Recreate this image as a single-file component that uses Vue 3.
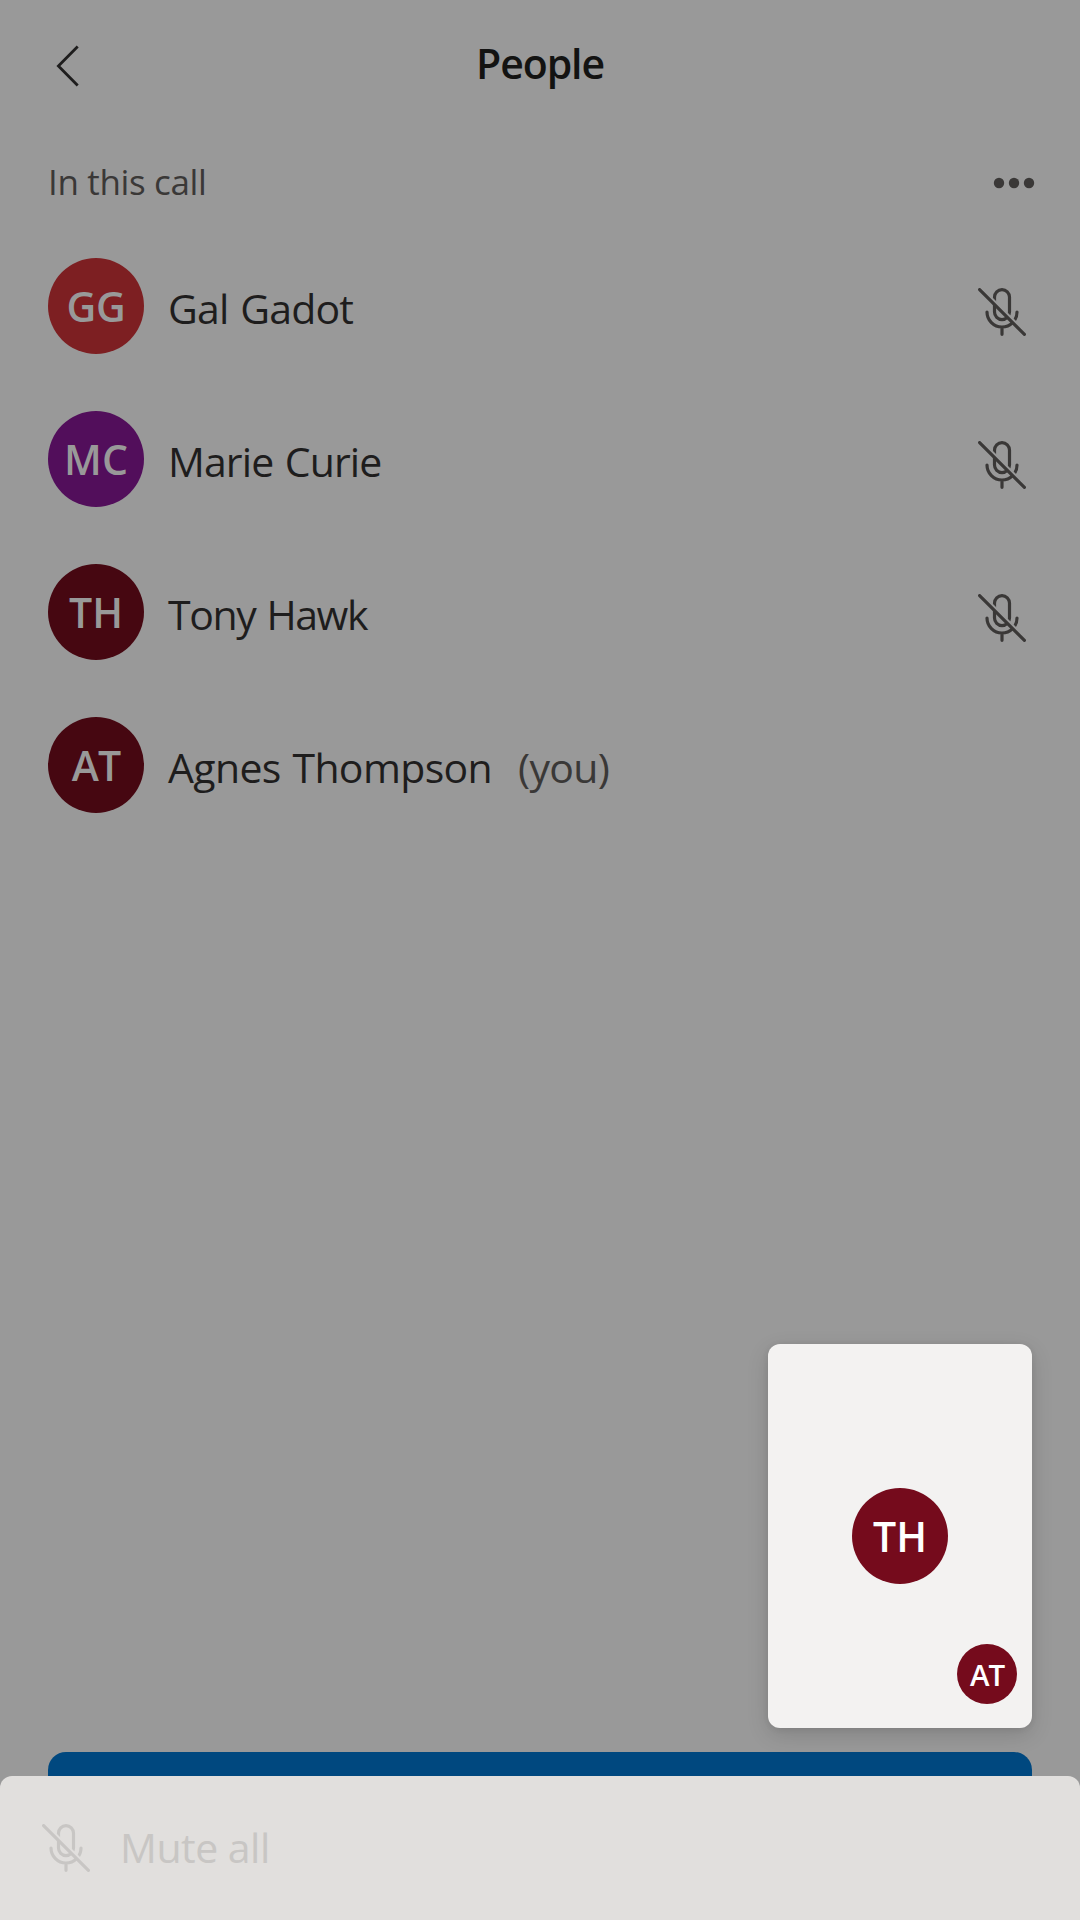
<script setup>
const people = [
  { initials: 'GG', name: 'Gal Gadot', color: '#7d1f22', spacing: '-0.8px', tight: '-0.3px', muted: true },
  { initials: 'MC', name: 'Marie Curie', color: '#520e5b', spacing: '-0.9px', tight: '0.2px', muted: true },
  { initials: 'TH', name: 'Tony Hawk', color: '#460711', spacing: '-1.4px', tight: '0px', muted: true },
  { initials: 'AT', name: 'Agnes Thompson', color: '#460711', spacing: '-0.65px', tight: '-1px', muted: false, you: true },
]
</script>

<template>
  <div class="screen">
    <svg class="defs" width="0" height="0" aria-hidden="true">
      <defs>
        <clipPath id="above-slash"><path d="M0 -5H48V43Z" /></clipPath>
        <clipPath id="below-slash"><path d="M0 0L48 48H0Z" /></clipPath>
        <symbol id="mic-off" viewBox="0 0 48 48">
          <g fill="none" stroke="currentColor" stroke-width="3.2" stroke-linecap="round">
            <g clip-path="url(#above-slash)">
              <rect x="16.5" y="1.6" width="15" height="30" rx="7.5" />
              <path d="M9 24a15 15 0 0 0 30 0" />
            </g>
            <g clip-path="url(#below-slash)">
              <rect x="16.5" y="1.6" width="15" height="30" rx="7.5" />
              <path d="M9 24a15 15 0 0 0 30 0M24 39v7.3" />
            </g>
            <path d="M1.6 1.6l44.8 44.8" />
          </g>
        </symbol>
      </defs>
    </svg>

    <header class="bar">
      <svg class="back" width="30" height="48" viewBox="0 0 30 48">
        <path d="M23.7 4.5L4.4 24l19.3 19.5" fill="none" stroke="currentColor" stroke-width="2.8" />
      </svg>
      <h1>People</h1>
    </header>

    <section class="section">
      <h2>In this call</h2>
      <svg width="42" height="12" viewBox="0 0 42 12" fill="currentColor">
        <circle cx="6" cy="6" r="5.2" /><circle cx="21" cy="6" r="5.2" /><circle cx="36" cy="6" r="5.2" />
      </svg>
    </section>

    <ul class="people">
      <li v-for="p in people" :key="p.name">
        <div class="avatar" :style="{ background: p.color, letterSpacing: p.tight }">{{ p.initials }}</div>
        <span class="name" :style="{ letterSpacing: p.spacing }">{{ p.name }}</span>
        <span v-if="p.you" class="you">(you)</span>
        <svg v-if="p.muted" class="mic"><use href="#mic-off" /></svg>
      </li>
    </ul>

    <div class="action"></div>

    <div class="call-card">
      <div class="avatar lit">TH</div>
      <div class="avatar lit small">AT</div>
    </div>

    <footer class="sheet">
      <svg class="mic"><use href="#mic-off" /></svg>
      <span>Mute all</span>
    </footer>
  </div>
</template>

<style>
body {
  margin: 0;
}
</style>

<style scoped>
.screen {
  position: relative;
  display: flex;
  flex-direction: column;
  width: 1080px;
  height: 1920px;
  overflow: hidden;
  background: #999;
  color: #1e1d1d;
  font-family: "Open Sans", "Noto Sans", sans-serif;
  font-size: 41px;
  white-space: nowrap;
}
.defs {
  position: absolute;
}
svg {
  flex: none;
  display: block;
}
h1, h2, ul {
  margin: 0;
  padding: 0;
}
.bar {
  display: grid;
  grid-template-columns: 200px 1fr 200px;
  align-items: center;
  height: 132px;
}
.back {
  margin-left: 54px;
}
h1 {
  padding-bottom: 6px;
  color: #131312;
  font-size: 41px;
  font-weight: 600;
  line-height: 60px;
  letter-spacing: -1.1px;
  text-align: center;
}
.section {
  display: flex;
  align-items: center;
  justify-content: space-between;
  height: 102px;
  padding: 0 45px 0 48px;
  color: #3a3837;
}
h2 {
  padding-bottom: 2px;
  font-size: 35px;
  font-weight: 400;
  line-height: 48px;
  letter-spacing: -0.35px;
}
.people {
  display: flex;
  flex-direction: column;
  gap: 57px;
  margin: 24px 54px 0 48px;
  list-style: none;
}
li {
  display: flex;
  align-items: center;
  height: 96px;
}
.avatar {
  flex: none;
  display: flex;
  align-items: center;
  justify-content: center;
  box-sizing: border-box;
  width: 96px;
  height: 96px;
  border-radius: 50%;
  color: #999;
  font-weight: 600;
  line-height: 60px;
  letter-spacing: 0;
}
.name {
  margin-left: 24px;
  padding-top: 4px;
  line-height: 60px;
  word-spacing: 1.8px;
}
.you {
  margin-left: 26px;
  padding-top: 4px;
  color: #3a3837;
  line-height: 60px;
  letter-spacing: -0.7px;
}
.mic {
  width: 48px;
  height: 48px;
}
li .mic {
  margin: 12px 0 0 auto;
  color: #3a3837;
}
.action {
  position: absolute;
  left: 48px;
  right: 48px;
  top: 1752px;
  height: 144px;
  border-radius: 18px;
  background: #00487f;
}
.call-card {
  position: absolute;
  left: 768px;
  top: 1344px;
  display: flex;
  align-items: center;
  justify-content: center;
  width: 264px;
  height: 384px;
  border-radius: 12px;
  background: #f3f2f1;
  box-shadow: 0 7px 22px rgba(0, 0, 0, 0.14), 0 1px 6px rgba(0, 0, 0, 0.08);
}
.lit {
  background: #750b1c;
  color: #fff;
}
.small {
  position: absolute;
  right: 15px;
  bottom: 24px;
  width: 60px;
  height: 60px;
  padding: 2px 0 0;
  font-size: 29.5px;
  letter-spacing: -1px;
}
.sheet {
  position: absolute;
  left: 0;
  right: 0;
  bottom: 0;
  display: flex;
  align-items: center;
  height: 144px;
  padding-left: 42px;
  box-sizing: border-box;
  border-radius: 12px 12px 0 0;
  background: #e1dfdd;
  color: #c8c6c4;
}
.sheet span {
  margin-left: 30px;
  padding-bottom: 2px;
  line-height: 60px;
  letter-spacing: -0.5px;
}
</style>
